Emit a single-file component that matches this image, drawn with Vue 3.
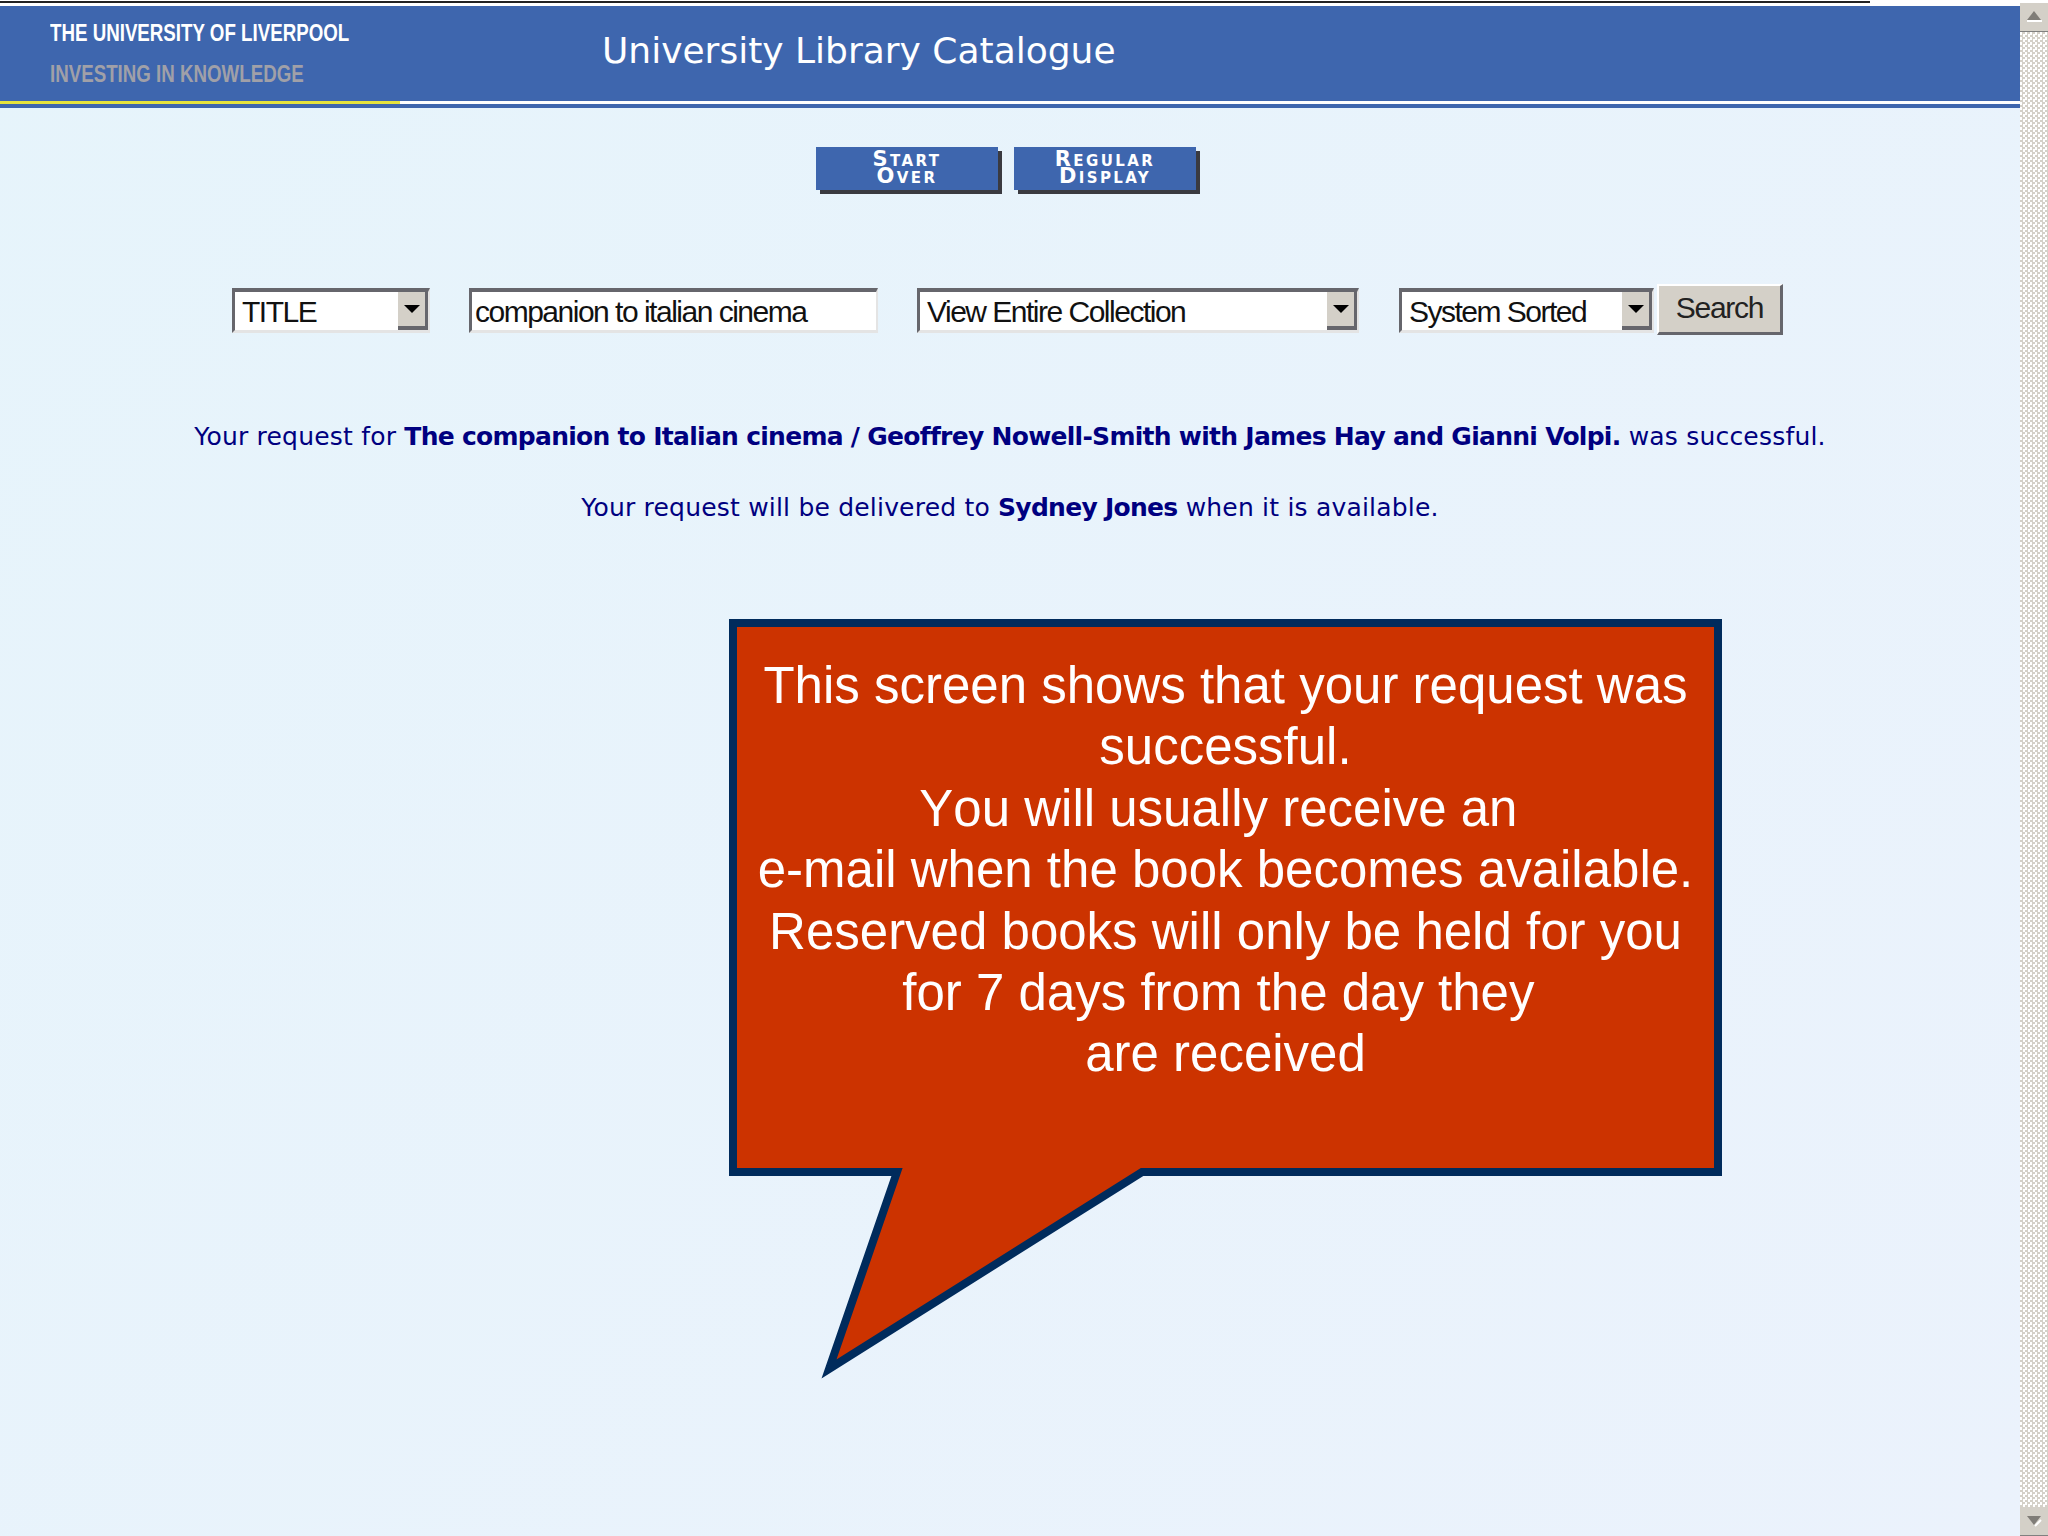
<script setup>
const lines = [
  'This screen shows that your request was',
  'successful.',
  'You will usually receive an\u00a0',
  'e-mail when the book becomes available.',
  'Reserved books will only be held for you',
  'for 7 days from the day they\u00a0',
  'are received'
]
const controls = [
  { label: 'TITLE', cls: 'sel-title' },
  { label: 'View Entire Collection', cls: 'sel-view' },
  { label: 'System Sorted', cls: 'sel-sort' }
]
</script>

<template>
  <div class="page">
    <main class="main">
      <div class="topstrip"><div class="topline"></div></div>
      <header class="header">
        <div class="brand">
          <div class="uni">THE UNIVERSITY OF LIVERPOOL</div>
          <div class="motto">INVESTING IN KNOWLEDGE</div>
        </div>
        <div class="title">University Library Catalogue</div>
      </header>
      <div class="rule"><div class="rule-yellow"></div></div>
      <div class="rule-blue"></div>

      <nav class="navbtns">
        <div class="navbtn"><div class="nl">Start</div><div class="nl">Over</div></div>
        <div class="navbtn"><div class="nl">Regular</div><div class="nl">Display</div></div>
      </nav>

      <form class="search" @submit.prevent>
        <div class="field" :class="controls[0].cls">
          <span>{{ controls[0].label }}</span>
          <i class="drop"><b></b></i>
        </div>
        <div class="field sel-input"><span>companion to italian cinema</span></div>
        <div class="field" :class="controls[1].cls">
          <span>{{ controls[1].label }}</span>
          <i class="drop"><b></b></i>
        </div>
        <div class="field" :class="controls[2].cls">
          <span>{{ controls[2].label }}</span>
          <i class="drop"><b></b></i>
        </div>
        <button class="go" type="button">Search</button>
      </form>

      <p class="msg first">Your request for <b>The companion to Italian cinema / Geoffrey Nowell-Smith with James Hay and Gianni Volpi.</b> was successful.</p>
      <p class="msg second">Your request will be delivered to <b>Sydney Jones</b> when it is available.</p>
    </main>

    <aside class="scrollbar">
      <div class="sb-btn up"><svg width="18" height="14" viewBox="0 0 18 14"><path d="M9 1 L16 10 H2 Z" fill="#807d78" /><path d="M2 11 H17" stroke="#fff" stroke-width="2" /></svg></div>
      <div class="sb-track"></div>
      <div class="sb-btn down"><svg width="18" height="14" viewBox="0 0 18 14"><path d="M2 2 H16 L9 11 Z" fill="#807d78" /><path d="M10 12 L16 6" stroke="#fff" stroke-width="2" /></svg></div>
    </aside>

    <div class="callout">
      <svg class="callout-shape" width="1000" height="770" viewBox="0 0 1000 770">
        <path d="M4 4 H989 V553 H413 L100 750 L168 553 H4 Z" fill="#cc3300" stroke="#002b5c" stroke-width="8" stroke-miterlimit="20" />
      </svg>
      <div class="callout-text">
        <div v-for="l in lines" :key="l">{{ l }}</div>
      </div>
    </div>
  </div>
</template>

<style scoped>
.page {
  position: relative;
  display: flex;
  width: 2048px;
  height: 1536px;
  overflow: hidden;
  background: linear-gradient(135deg, #e6f4fb, #ebf2fc);
}
.main {
  flex: 1;
  min-width: 0;
  display: flex;
  flex-direction: column;
}
.topstrip {
  height: 6px;
  background: #fff;
  padding-top: 1px;
  box-sizing: border-box;
}
.topline {
  width: 1870px;
  height: 2px;
  background: #222;
}
.header {
  height: 95px;
  background: #3e66ae;
  display: flex;
  align-items: flex-start;
  color: #fff;
}
.brand {
  width: 602px;
  padding-left: 50px;
  box-sizing: border-box;
  font-family: "Liberation Sans", sans-serif;
  font-weight: 700;
}
.uni,
.motto {
  font-size: 24px;
  line-height: 30px;
  white-space: nowrap;
  transform: scaleX(0.78);
  transform-origin: left center;
}
.uni { margin-top: 12px; }
.motto {
  margin-top: 11px;
  color: #a0a0a8;
}
.title {
  font-family: "DejaVu Sans", sans-serif;
  font-size: 36px;
  line-height: 44px;
  margin-top: 23px;
  white-space: nowrap;
}
.rule {
  height: 3px;
  background: #fff;
}
.rule-yellow {
  width: 400px;
  height: 3px;
  background: #e6e33c;
}
.rule-blue {
  height: 4px;
  background: #3e66ae;
}
.navbtns {
  display: flex;
  gap: 16px;
  padding-left: 816px;
  margin-top: 39px;
}
.navbtn {
  width: 182px;
  height: 43px;
  background: #3e66ae;
  box-shadow: 4px 4px 0 #3a3a40;
  color: #fff;
  font-family: "DejaVu Sans", sans-serif;
  font-weight: 700;
  font-variant: small-caps;
  font-size: 21px;
  letter-spacing: 2.4px;
  text-align: center;
  padding-top: 4px;
  box-sizing: border-box;
}
.nl {
  height: 17px;
  line-height: 17px;
}
.search {
  display: flex;
  align-items: flex-start;
  margin: 94px 0 0;
  padding-left: 232px;
  height: 51px;
  font-family: "Liberation Sans", sans-serif;
  font-size: 30px;
  letter-spacing: -1.5px;
  color: #111;
}
.field {
  margin-top: 4px;
  height: 45px;
  box-sizing: border-box;
  display: flex;
  align-items: center;
  justify-content: space-between;
  background: #fff;
  border-style: solid;
  border-width: 4px 2px 3px 3px;
  border-color: #66666c #e4e4e4 #e4e4e4 #66666c;
  padding-left: 7px;
  white-space: nowrap;
}
.field span { padding-top: 2px; }
.sel-title { width: 198px; margin-right: 39px; }
.sel-input { width: 409px; margin-right: 39px; padding-left: 3px; }
.sel-view { width: 442px; margin-right: 40px; }
.sel-sort { width: 255px; margin-right: 3px; }
.drop {
  width: 30px;
  height: 38px;
  background: #d4d0c8;
  box-sizing: border-box;
  border-right: 3px solid #66666c;
  border-bottom: 4px solid #66666c;
  display: flex;
  align-items: center;
  justify-content: center;
}
.drop b {
  width: 0;
  height: 0;
  border-left: 8px solid transparent;
  border-right: 8px solid transparent;
  border-top: 8px solid #000;
}
.go {
  width: 126px;
  height: 51px;
  padding: 0 0 3px;
  font: inherit;
  letter-spacing: -1.3px;
  color: #222;
  background: #d4d0c8;
  border-style: solid;
  border-width: 2px 3px 3px 2px;
  border-color: #fff #66666c #66666c #fff;
}
.msg {
  margin: 0;
  text-align: center;
  font-family: "DejaVu Sans", sans-serif;
  font-size: 25px;
  letter-spacing: 0.2px;
  line-height: 34px;
  color: #000080;
  white-space: nowrap;
}
.msg b { letter-spacing: -0.72px; }
.msg.first { margin-top: 85px; }
.msg.second { margin-top: 37px; }
.scrollbar {
  width: 28px;
  display: flex;
  flex-direction: column;
  background: #fff;
  padding-top: 3px;
  box-sizing: border-box;
}
.sb-btn {
  height: 29px;
  background: #d4d0c8;
  display: flex;
  align-items: center;
  justify-content: center;
  border-bottom: 1px solid #808080;
  box-sizing: border-box;
}
.sb-track {
  flex: 1;
  background: repeating-conic-gradient(#d4d0c8 0 25%, #fff 0 50%) 0 0 / 5px 5px;
}
.callout {
  position: absolute;
  left: 729px;
  top: 619px;
  width: 993px;
  height: 760px;
}
.callout-shape {
  position: absolute;
  left: 0;
  top: 0;
  overflow: visible;
}
.callout-text {
  position: absolute;
  left: 0;
  top: 36px;
  width: 993px;
  text-align: center;
  font-family: "Liberation Sans", sans-serif;
  font-size: 51px;
  font-kerning: none;
  line-height: 61.4px;
  color: #fff;
}
</style>
